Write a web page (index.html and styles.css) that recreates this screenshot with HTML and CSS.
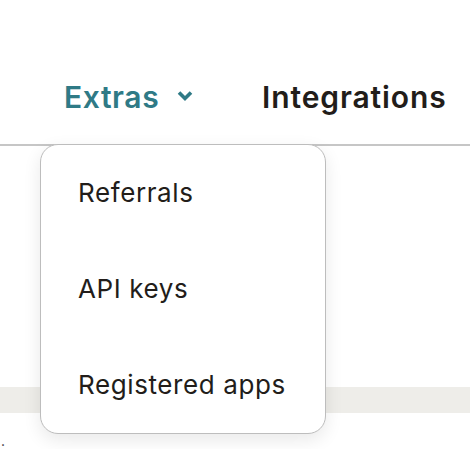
FILE: index.html
```html
<!DOCTYPE html>
<html lang="en">
<head>
  <meta charset="UTF-8" />
  <meta name="viewport" content="width=device-width, initial-scale=1.0" />
  <title>Account – Extras</title>
  <link rel="stylesheet" href="styles.css">
</head>
<body>

<header class="topnav">
  <div class="nav-item extras">
    <span>Extras</span>
    <svg class="chev" width="16" height="12" viewBox="0 0 16 12" aria-hidden="true">
      <path d="M2 2.5 L8 8.5 L14 2.5" fill="none" stroke="currentColor" stroke-width="3.6"/>
    </svg>
    <!-- open dropdown -->
    <ul class="dropdown">
      <li>Referrals</li>
      <li>API keys</li>
      <li>Registered apps</li>
    </ul>
  </div>
  <div class="nav-item">Integrations</div>
</header>

<main>
  <div class="band"></div>
  <p class="dot">.</p>
</main>

</body>
</html>
```

FILE: styles.css
```css
:root   { --teal:#2f7a86; --ink:#221d1a; --line:#c6c6c6; }
*       { box-sizing:border-box; margin:0; padding:0; }
body    { font-family:Inter,'Noto Sans',sans-serif; background:#fff; color:var(--ink); }

.topnav { display:flex; align-items:flex-end; height:146px; padding:0 0 29px 64px;
          border-bottom:2px solid var(--line); }
.nav-item { font-size:30px; font-weight:600; line-height:36px; letter-spacing:.9px;
            position:relative; display:flex; align-items:center; }
.extras { color:var(--teal); width:198px; letter-spacing:.6px; }
.extras .chev { margin-left:18px; margin-top:-2px; }

/* dropdown panel */
.dropdown { position:absolute; left:-24px; top:65px; width:286px; list-style:none;
            background:#fff; border:1px solid #bdbdbd; border-radius:18px;
            box-shadow:0 6px 18px rgba(0,0,0,.09); z-index:2; letter-spacing:.6px; }
.dropdown li { height:96px; display:flex; align-items:center; padding-left:37px;
               font-size:26px; font-weight:400; color:var(--ink); }

main    { padding-top:241px; }
.band   { height:26px; background:#eeede9; }
.dot    { font-size:14px; line-height:16px; padding:20px 0 0 1px; color:#333; }
```
